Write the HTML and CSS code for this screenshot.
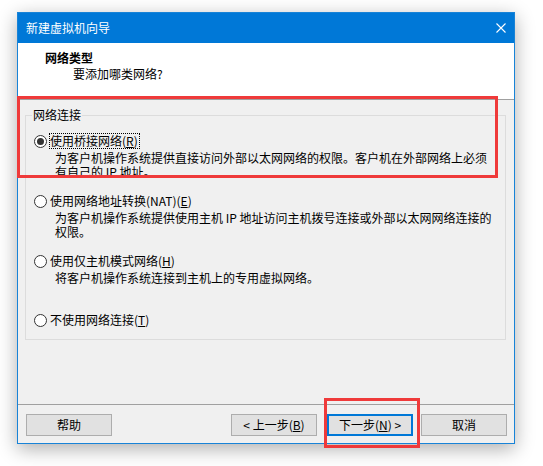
FILE: index.html
```html
<!DOCTYPE html>
<html lang="zh-CN">
<head>
<meta charset="utf-8">
<title>新建虚拟机向导</title>
<link rel="stylesheet" href="styles.css">
</head>
<body>
<div class="window">
  <div class="titlebar">
    <span class="title">新建虚拟机向导</span>
    <svg class="close" width="10" height="10" viewBox="0 0 10 10"><path d="M0.5 0.5 L9.5 9.5 M9.5 0.5 L0.5 9.5" stroke="#fff" stroke-width="1.1" fill="none"/></svg>
  </div>
  <div class="header">
    <div class="h-title">网络类型</div>
    <div class="h-sub">要添加哪类网络?</div>
  </div>
  <div class="content">
    <div class="group">
      <span class="group-title">网络连接</span>
      <div class="option o1">
        <div class="opt-row"><span class="radio on"></span><span class="opt-label focus">使用桥接网络(<u>R</u>)</span></div>
        <div class="desc">为客户机操作系统提供直接访问外部以太网网络的权限。客户机在外部网络上必须</div>
        <div class="desc next">有自己的 IP 地址。</div>
      </div>
      <div class="option o2">
        <div class="opt-row"><span class="radio"></span><span class="opt-label">使用网络地址转换(NAT)(<u>E</u>)</span></div>
        <div class="desc">为客户机操作系统提供使用主机 IP 地址访问主机拨号连接或外部以太网网络连接的</div>
        <div class="desc next">权限。</div>
      </div>
      <div class="option o3">
        <div class="opt-row"><span class="radio"></span><span class="opt-label">使用仅主机模式网络(<u>H</u>)</span></div>
        <div class="desc">将客户机操作系统连接到主机上的专用虚拟网络。</div>
      </div>
      <div class="option o4">
        <div class="opt-row"><span class="radio"></span><span class="opt-label">不使用网络连接(<u>T</u>)</span></div>
      </div>
    </div>
  </div>
  <div class="footer">
    <button class="btn">帮助</button>
    <span class="spacer"></span>
    <button class="btn">&lt; 上一步(<u>B</u>)</button>
    <button class="btn default">下一步(<u>N</u>) &gt;</button>
    <button class="btn cancel">取消</button>
  </div>
</div>
<div class="mark mark-options"></div>
<div class="mark mark-next"></div>
</body>
</html>
```
FILE: styles.css
```css
html, body {
  margin: 0;
  padding: 0;
  background: #ffffff;
}
body {
  position: relative;
  width: 543px;
  height: 466px;
  overflow: hidden;
  font-family: "Noto Sans CJK SC", "Noto Sans", sans-serif;
  font-size: 12px;
  color: #000;
}
.window {
  box-sizing: border-box;
  width: 498px;
  margin: 12px 0 0 17px;
  border: 1px solid #1883d7;
  background: #f0f0f0;
  box-shadow: 0 5px 18px rgba(0, 0, 0, 0.32);
}
.titlebar {
  height: 30px;
  background: #0078d7;
  display: flex;
  align-items: center;
  justify-content: space-between;
  padding: 0 8px 0 8px;
  color: #fff;
  line-height: 30px;
}
.title {
  font-size: 12px;
}
.close {
  display: block;
}
.header {
  box-sizing: border-box;
  height: 57px;
  background: #fff;
  border-bottom: 1px solid #a0a0a0;
  padding-top: 8px;
}
.h-title {
  font-weight: 700;
  line-height: 14px;
  padding-left: 27px;
}
.h-sub {
  line-height: 14px;
  margin-top: 2px;
  padding-left: 55px;
}
.content {
  box-sizing: border-box;
  height: 304px;
  padding-top: 15px;
}
.group {
  position: relative;
  box-sizing: border-box;
  margin: 0 8px 0 7px;
  height: 225px;
  border: 1px solid #dcdcdc;
  padding-top: 18px;
}
.group-title {
  position: absolute;
  top: -8px;
  left: 6px;
  padding: 0 1px;
  line-height: 14px;
  background: #f0f0f0;
}
.option {
  box-sizing: border-box;
  padding-left: 8px;
}
.o1, .o2 { height: 60px; }
.o3 { height: 59px; }
.opt-row {
  display: flex;
  align-items: center;
  height: 14px;
}
.radio {
  position: relative;
  box-sizing: border-box;
  width: 13px;
  height: 13px;
  border: 1px solid #333;
  border-radius: 50%;
  background: #fff;
  margin-right: 2px;
  flex: none;
}
.radio.on::after {
  content: "";
  position: absolute;
  left: 2px;
  top: 2px;
  width: 7px;
  height: 7px;
  border-radius: 50%;
  background: #333;
}
.opt-label {
  line-height: 14px;
  border: 1px dotted transparent;
  padding: 0 1px 0 0;
  white-space: nowrap;
}
.opt-label.focus {
  border-color: #000;
}
.desc {
  margin-top: 3px;
  padding-left: 21px;
  line-height: 14px;
  height: 14px;
  white-space: nowrap;
}
.desc.next {
  margin-top: 0;
}
.footer {
  display: flex;
  align-items: center;
  border-top: 1px solid #a0a0a0;
  padding: 9px 7px 7px 8px;
}
.spacer {
  flex: 1;
}
.btn {
  box-sizing: border-box;
  width: 86px;
  height: 22px;
  margin: 0;
  padding: 0;
  border: 1px solid #adadad;
  background: #e1e1e1;
  font-family: "Noto Sans CJK SC", "Noto Sans", sans-serif;
  font-size: 12px;
  line-height: 18px;
  color: #000;
  text-align: center;
}
.btn.default {
  border: 2px solid #0078d7;
  margin-left: 10px;
}
.btn.cancel {
  margin-left: 8px;
}
.mark {
  position: absolute;
  box-sizing: border-box;
  border: 3px solid #ef3a3a;
}
.mark-options {
  left: 17px;
  top: 96px;
  width: 481px;
  height: 82px;
}
.mark-next {
  left: 324px;
  top: 398px;
  width: 96px;
  height: 50px;
}
```
